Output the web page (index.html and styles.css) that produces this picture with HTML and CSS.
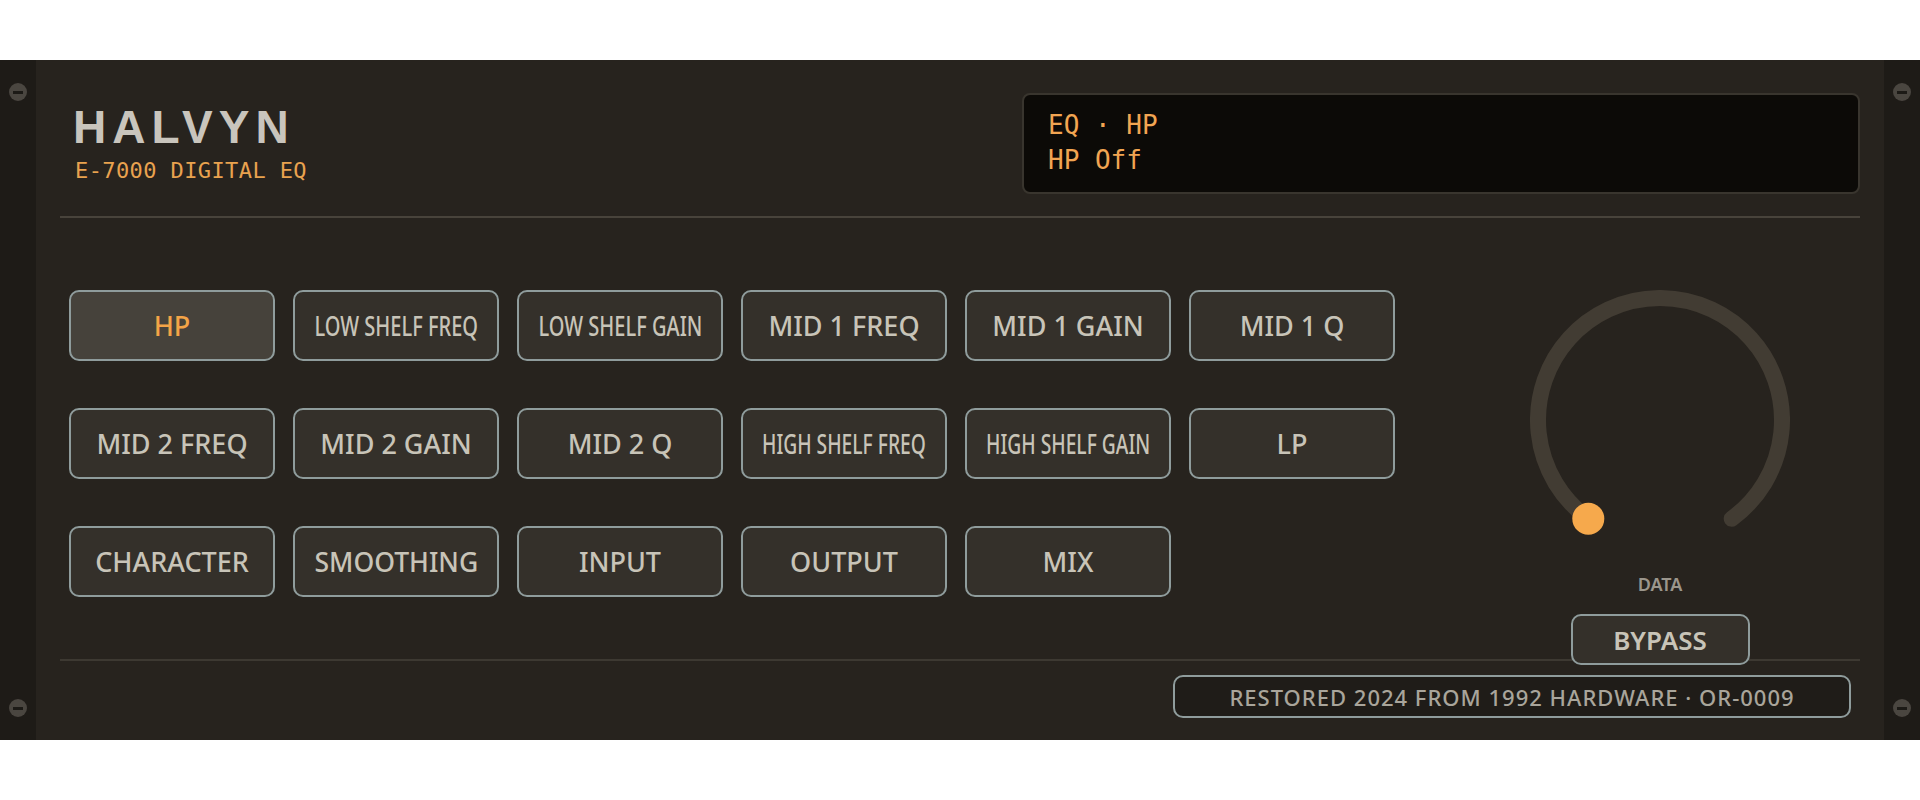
FILE: index.html
```html
<!DOCTYPE html>
<html lang="en">
<head>
    <meta charset="UTF-8">
    <meta name="viewport" content="width=device-width, initial-scale=1.0">
    <title>Halvyn E-7000 Digital EQ</title>
    <link rel="stylesheet" href="styles.css">
</head>
<body>
    <div class="rack">
        <div class="ear">
            <span class="screw"></span>
            <span class="screw"></span>
        </div>

        <div class="face">
            <div class="header">
                <div class="logo">
                    <div class="brand">HALVYN</div>
                    <div class="model">E-7000 DIGITAL EQ</div>
                </div>
                <div class="display">
                    <div>EQ · HP</div>
                    <div>HP Off</div>
                </div>
            </div>

            <div class="main">
                <div class="keys">
                    <button class="key active"><span class="key-label">HP</span></button>
                    <button class="key"><span class="key-label">LOW SHELF FREQ</span></button>
                    <button class="key"><span class="key-label">LOW SHELF GAIN</span></button>
                    <button class="key"><span class="key-label">MID 1 FREQ</span></button>
                    <button class="key"><span class="key-label">MID 1 GAIN</span></button>
                    <button class="key"><span class="key-label">MID 1 Q</span></button>
                    <button class="key"><span class="key-label">MID 2 FREQ</span></button>
                    <button class="key"><span class="key-label">MID 2 GAIN</span></button>
                    <button class="key"><span class="key-label">MID 2 Q</span></button>
                    <button class="key"><span class="key-label">HIGH SHELF FREQ</span></button>
                    <button class="key"><span class="key-label">HIGH SHELF GAIN</span></button>
                    <button class="key"><span class="key-label">LP</span></button>
                    <button class="key"><span class="key-label">CHARACTER</span></button>
                    <button class="key"><span class="key-label">SMOOTHING</span></button>
                    <button class="key"><span class="key-label">INPUT</span></button>
                    <button class="key"><span class="key-label">OUTPUT</span></button>
                    <button class="key"><span class="key-label">MIX</span></button>
                </div>

                <div class="knob-col">
                    <svg class="knob" width="260" height="260" viewBox="0 0 260 260">
                        <path d="M 58.3 228.7 A 122 122 0 1 1 201.7 228.7" fill="none" stroke="#423c33" stroke-width="16" stroke-linecap="round"/>
                        <circle cx="58.3" cy="228.7" r="16" fill="#f6a94c"/>
                    </svg>
                    <div class="knob-label">DATA</div>
                    <button class="bypass">BYPASS</button>
                </div>
            </div>

            <div class="footer">
                <div class="badge">RESTORED 2024 FROM 1992 HARDWARE · OR-0009</div>
            </div>
        </div>

        <div class="ear">
            <span class="screw"></span>
            <span class="screw"></span>
        </div>
    </div>

    <script>
        // long labels get squeezed so they fit inside the key
        document.querySelectorAll('.key-label').forEach(function(label) {
            const room = label.parentElement.clientWidth - 38;
            const width = label.offsetWidth;
            if (width > room) {
                label.style.transform = 'scaleX(' + (room / width).toFixed(3) + ')';
            }
        });
    </script>
</body>
</html>
```

FILE: styles.css
```css
body { margin: 0; padding-top: 60px; background-color: #fff; font-family: "Noto Sans", sans-serif; }
.rack { display: flex; height: 680px; background-color: #27231e; }
.ear { width: 36px; background-color: #1e1b17; display: flex; flex-direction: column; justify-content: space-between; align-items: center; padding: 23px 0; box-sizing: border-box; }
.screw { position: relative; width: 18px; height: 18px; border-radius: 50%; background-color: #4a4640; }
.screw::after { content: ""; position: absolute; left: 4px; top: 7.5px; width: 10px; height: 3px; background-color: #1c1a16; }
.face { flex: 1; display: flex; flex-direction: column; padding: 0 24px; }

.header { display: flex; justify-content: space-between; align-items: flex-start; padding: 33px 0 22px; border-bottom: 2px solid #48433b; }
.logo { padding: 11px 0 0 13px; }
.brand { font-family: "Liberation Sans", Arial, sans-serif; font-weight: bold; font-size: 46px; line-height: 46px; letter-spacing: 6px; color: #c9c5bd; }
.model { margin-top: 8px; margin-left: 2px; font-family: "DejaVu Sans Mono", monospace; font-size: 22px; line-height: 26px; letter-spacing: 0.4px; color: #e9a24f; }
.display { width: 838px; box-sizing: border-box; background-color: #0c0a07; border: 2px solid #39352e; border-radius: 8px; padding: 13px 24px 14px; font-family: "DejaVu Sans Mono", monospace; font-size: 26px; line-height: 35px; color: #f2a552; }

.main { display: flex; align-items: flex-start; padding: 72px 0 0 9px; }
.keys { display: grid; grid-template-columns: repeat(6, 206px); grid-auto-rows: 71px; gap: 47px 18px; }
.key { display: flex; align-items: center; justify-content: center; padding: 0; background-color: #34302a; border: 2px solid #8f9c9c; border-radius: 10px; font-family: "Noto Sans", sans-serif; font-size: 27px; font-weight: 500; color: #c8c4b8; cursor: pointer; }
.key.active { background-color: #46423b; color: #f3a447; }
.key-label { display: inline-block; white-space: nowrap; flex-shrink: 0; }

.knob-col { margin-left: auto; margin-right: 70px; margin-bottom: -6px; width: 260px; display: flex; flex-direction: column; align-items: center; }
.knob { display: block; }
.knob-label { margin-top: 22px; font-size: 18px; line-height: 24px; font-weight: 600; color: #9b968c; }
.bypass { position: relative; z-index: 1; margin-top: 18px; width: 179px; height: 51px; padding: 0; background-color: #34302a; border: 2px solid #8f9c9c; border-radius: 10px; font-family: "Noto Sans", sans-serif; font-size: 26px; font-weight: 600; color: #c8c4b8; cursor: pointer; }

.footer { flex: 1; display: flex; justify-content: flex-end; align-items: flex-start; padding: 14px 9px 0 0; border-top: 2px solid #3d3932; }
.badge { width: 678px; height: 43px; box-sizing: border-box; display: flex; align-items: center; justify-content: center; background-color: #1f1c18; border: 2px solid #8f9c9c; border-radius: 10px; font-size: 22px; font-weight: 500; letter-spacing: 1px; color: #a9a59b; }
```
